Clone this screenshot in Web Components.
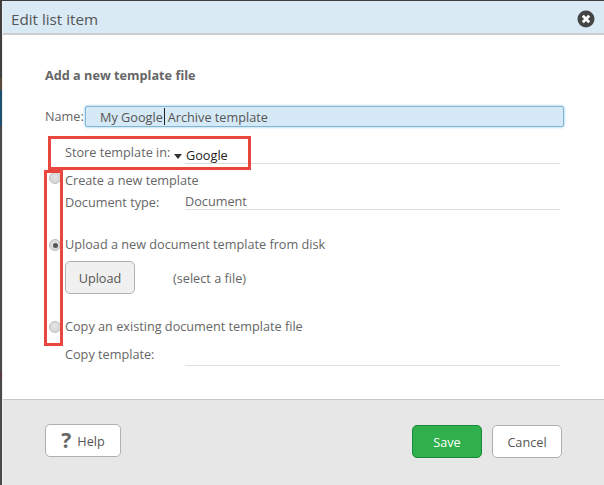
<!DOCTYPE html>
<html><head><meta charset="utf-8">
<style>
html,body{margin:0;height:100%;overflow:hidden}
body{font:12.7px/16px "Open Sans",sans-serif;color:#666;background:linear-gradient(#3f3f3f 0 78px,#5a4a3a 78px 90px,#1f4f6e 90px 126px,#4a4a4a 126px 372px,#5a3a4a 372px 378px,#4a4a4a 378px)}
</style></head><body>
<template id="t-dialog"><style>
:host{display:flex;flex-direction:column;position:relative;height:484px;margin:1px 0 0 2px;width:602px;box-sizing:border-box;background:#fff;border-left:1px solid #eee}
header{height:29px;flex:none;background:#d9eaf5;border-bottom:2px solid #ccc;display:flex;align-items:center;justify-content:space-between;padding:3px 9px 0 8px;font-size:15.2px;color:#555}
main{flex:1;padding:32px 0 0 42px;box-sizing:border-box;min-height:0}
footer{flex:none;height:86px;box-sizing:border-box;background:#e7e7e7;border-top:1px solid #c8c8c8;display:flex;align-items:flex-start;padding:24px 42px 0 42px;gap:10px}
.sp{flex:1}
</style>
<header><slot name="title"></slot><slot name="close"></slot></header>
<main><slot></slot></main>
<footer><slot name="left"></slot><span class="sp"></span><slot name="right"></slot></footer>
<slot name="overlay"></slot>
</template>

<template id="t-field"><style>
:host{display:flex;align-items:flex-end;margin-left:20px;width:495px}
.l{width:120px;flex:none;line-height:16px}
.v{flex:1;border-bottom:1px solid #e0e0e0;height:var(--h,17px);line-height:16px;color:var(--c,#666);box-sizing:border-box}
</style><span class="l"><slot name="label"></slot></span><span class="v"><slot></slot></span></template>

<template id="t-radio"><style>
:host{display:flex;align-items:center;height:16px;margin-left:4px;gap:4px;position:relative}
i{width:12px;height:12px;box-sizing:border-box;flex:none;border-radius:50%;border:1px solid #bdbdbd;background:radial-gradient(circle at 50% 40%,#e4e4e4,#d2d2d2);display:flex;align-items:center;justify-content:center;position:relative;top:var(--dy,0px)}
:host([checked]) i::after{content:"";width:5px;height:5px;border-radius:50%;background:#555}
</style><i></i><span><slot></slot></span></template>

<template id="t-btn"><style>
:host{display:inline-flex;align-items:center;justify-content:center;box-sizing:border-box;height:33px;width:70px;border:1px solid #b0b0b0;border-radius:5px;background:#fff;color:#555;font-size:12.7px}
:host([kind=save]){background:#2fb04c;border-color:#17893a;color:#fff}
:host([kind=grey]){background:#f0f0f0;color:#555;height:33px}
:host([kind=help]){width:76px;gap:6px}
</style><slot></slot></template>

<template id="t-mark"><style>
:host{display:block;position:absolute;box-sizing:border-box;border:3px solid #ea4640;pointer-events:none}
</style></template>

<x-dialog>
  <span slot="title">Edit list item</span>
  <svg slot="close" width="18" height="18" viewBox="0 0 18 18" style="display:block"><circle cx="9" cy="9" r="8.5" fill="#444"/><path d="M5.8 5.8l6.4 6.4M12.2 5.8l-6.4 6.4" stroke="#fff" stroke-width="2.8"/></svg>

  <div style="font-weight:700;color:#666;margin-bottom:22px">Add a new template file</div>

  <div style="display:flex;align-items:center;height:22px;">
    <span style="width:40px;flex:none;white-space:nowrap">Name:</span>
    <div style="width:479px;height:21px;box-sizing:border-box;border:1px solid #7fb5d5;border-radius:2px;background:#d6e9f6;box-shadow:0 0 3px #8cc4e4;padding-left:14px;line-height:20px;color:#555;display:flex;white-space:nowrap"><span>My Google</span><span style="width:1px;height:17px;background:#222;margin:1px 3px 0 1px;flex:none"></span><span>Archive template</span></div>
  </div>

  <x-field style="margin-top:15px;--h:22px;--c:#222"><span slot="label" style="position:relative;top:-4px">Store template in:</span><span style="display:block;padding-top:5px;margin-left:-11px;white-space:nowrap"><svg width="8" height="5" viewBox="0 0 8 5" style="margin-right:4px;vertical-align:1px"><path d="M0 0h8L4 5z" fill="#333"/></svg>Google</span></x-field>

  <x-radio style="margin-top:8px;--dy:-2px">Create a new template</x-radio>
  <x-field style="margin-top:5px;--h:17px"><span slot="label">Document type:</span>Document</x-field>

  <x-radio checked style="margin-top:26px;--dy:1px">Upload a new document template from disk</x-radio>
  <div style="display:flex;align-items:center;margin:9px 0 0 20px;gap:38px">
    <x-btn kind="grey">Upload</x-btn><span>(select a file)</span>
  </div>

  <x-radio style="margin-top:24px;--dy:1px">Copy an existing document template file</x-radio>
  <x-field style="margin-top:10px;--h:22px"><span slot="label" style="position:relative;top:-4px">Copy template:</span></x-field>

  <x-btn slot="left" kind="help"><span style="font:700 21px/20px 'Open Sans',sans-serif;color:#666;margin-top:-2px">?</span><span>Help</span></x-btn>
  <x-btn slot="right" kind="save" style="margin-top:1px">Save</x-btn>
  <x-btn slot="right" style="margin-top:1px">Cancel</x-btn>

  <x-mark slot="overlay" style="left:45px;top:135px;width:203px;height:34px"></x-mark>
  <x-mark slot="overlay" style="left:41px;top:169px;width:19px;height:176px"></x-mark>
</x-dialog>

<script>
const mk=(n,t)=>customElements.define(n,class extends HTMLElement{constructor(){super();this.attachShadow({mode:'open'}).appendChild(document.getElementById(t).content.cloneNode(true))}});
mk('x-dialog','t-dialog');mk('x-field','t-field');mk('x-radio','t-radio');mk('x-btn','t-btn');mk('x-mark','t-mark');
</script>
</body></html>
